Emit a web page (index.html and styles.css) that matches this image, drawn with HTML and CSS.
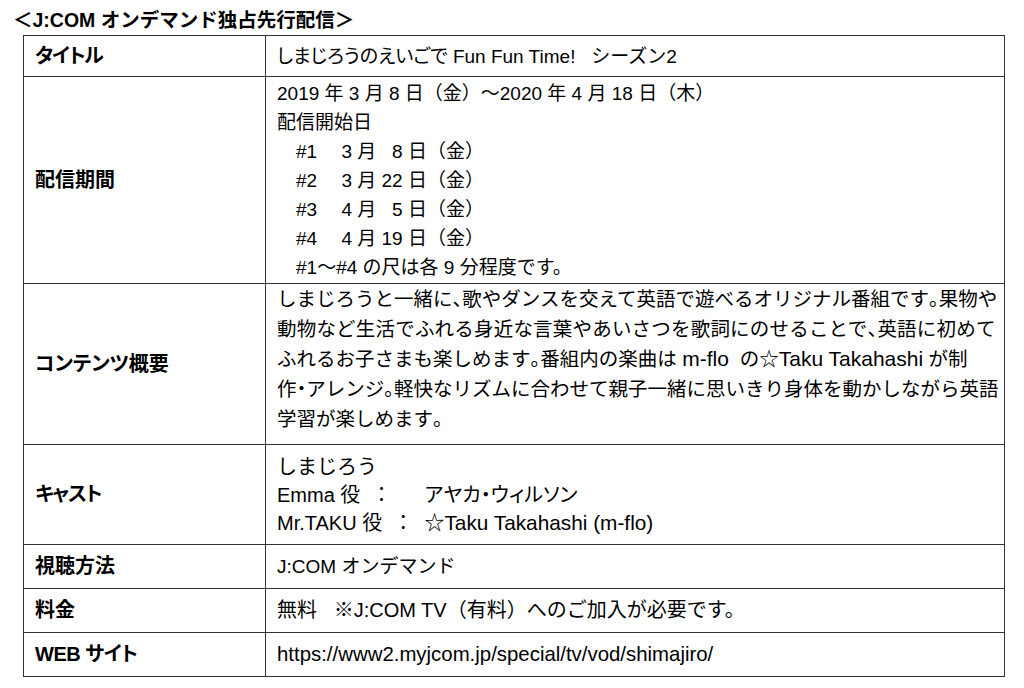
FILE: index.html
```html
<!DOCTYPE html>
<html lang="ja">
<head>
<meta charset="utf-8">
<title>J:COM オンデマンド独占先行配信</title>
<link rel="stylesheet" href="styles.css">
</head>
<body>
<div class="page">
  <h1 class="heading">＜J:COM オンデマンド独占先行配信＞</h1>
  <table class="info">
    <colgroup><col class="col-label"><col class="col-value"></colgroup>
    <tbody>
      <tr class="r-title">
        <th><span class="tight">タイトル</span></th>
        <td><span class="prop">しまじろうのえいごで</span> Fun Fun Time!&nbsp;&nbsp; シーズン2</td>
      </tr>
      <tr class="r-period">
        <th>配信期間</th>
        <td class="lines">2019 年 3 月 8 日（金）～2020 年 4 月 18 日（木）<br>配信開始日<br>　#1　 3 月&nbsp;&nbsp;&nbsp;8 日（金）<br>　#2　 3 月 22 日（金）<br>　#3　 4 月&nbsp;&nbsp;&nbsp;5 日（金）<br>　#4　 4 月 19 日（金）<br>　#1～#4 の尺は各 9 分程度です。</td>
      </tr>
      <tr class="r-content">
        <th>コンテンツ概要</th>
        <td class="summary">しまじろうと一緒に<span class="half">、</span>歌やダンスを交えて英語で遊べるオリジナル番組です<span class="half">。</span>果物や<br><span class="wide">動物など生活でふれる身近な言葉やあいさつを歌詞にのせることで<span class="half">、</span>英語に初めて</span><br>ふれるお子さまも楽しめます<span class="half">。</span>番組内の楽曲は <span class="en">m-flo</span>&nbsp; の☆<span class="en">Taku Takahashi</span> が制<br>作<span class="half">・</span>アレンジ<span class="half">。</span>軽快なリズムに合わせて親子一緒に思いきり身体を動かしながら英語<br>学習が楽しめます<span class="half">。</span></td>
      </tr>
      <tr class="r-cast">
        <th><span class="tight">キャスト</span></th>
        <td class="cast">しまじろう<br>Emma 役&nbsp;&nbsp;：&nbsp;&nbsp;&nbsp;&nbsp;&nbsp;&nbsp;<span class="prop">アヤカ・ウィルソン</span><br>Mr.TAKU 役&nbsp;&nbsp;：&nbsp;&nbsp;☆<span class="en-cast">Taku Takahashi (m-flo)</span></td>
      </tr>
      <tr class="r-single">
        <th>視聴方法</th>
        <td>J:COM オンデマンド</td>
      </tr>
      <tr class="r-single">
        <th>料金</th>
        <td class="fee">無料&nbsp;&nbsp; ※J:COM TV（有料）へのご加入が必要です。</td>
      </tr>
      <tr class="r-single">
        <th><span class="tight-sm">WEB サイト</span></th>
        <td class="url">https://www2.myjcom.jp/special/tv/vod/shimajiro/</td>
      </tr>
    </tbody>
  </table>
</div>
</body>
</html>
```

FILE: styles.css
```css
html, body {
  margin: 0;
  padding: 0;
  background: #ffffff;
}

body {
  font-family: "Liberation Sans", "Noto Sans CJK JP", sans-serif;
  color: #000000;
}

.page {
  padding: 7px 0 0 13px;
}

.heading {
  margin: 0 0 2px 0;
  font-size: 19.5px;
  line-height: 26px;
  font-weight: bold;
}

.info {
  margin-left: 10px;
  border-collapse: collapse;
  width: 981px;
  table-layout: fixed;
}

.col-label {
  width: 242px;
}

.col-value {
  width: 739px;
}

.info th,
.info td {
  border: 1px solid #333333;
  padding: 0 11px;
  font-size: 19px;
  line-height: 29px;
  text-align: left;
  vertical-align: middle;
  white-space: nowrap;
}

.info th {
  font-weight: bold;
  font-size: 20px;
  font-feature-settings: "palt";
}

.tight {
  letter-spacing: -1.2px;
}

.tight-sm {
  letter-spacing: -0.5px;
}

.prop {
  font-feature-settings: "palt";
}

.half {
  font-feature-settings: "halt";
}

.wide {
  letter-spacing: 0.2px;
}

.en {
  font-size: 21px;
}

.en-cast {
  font-size: 20.8px;
}

.r-title th,
.r-title td {
  height: 40px;
}

.r-period td,
.r-period th {
  height: 206px;
}

.r-content th,
.r-content td {
  height: 160px;
}

.info td.summary {
  vertical-align: top;
  font-size: 19.5px;
  line-height: 30px;
  padding-top: 0;
}

.r-cast th,
.r-cast td {
  height: 99px;
}

.info td.cast {
  font-size: 20px;
  line-height: 28px;
}

.info td.fee {
  font-size: 20px;
}

.info td.url {
  font-size: 20.4px;
}

.r-single th,
.r-single td {
  height: 43px;
}
```
